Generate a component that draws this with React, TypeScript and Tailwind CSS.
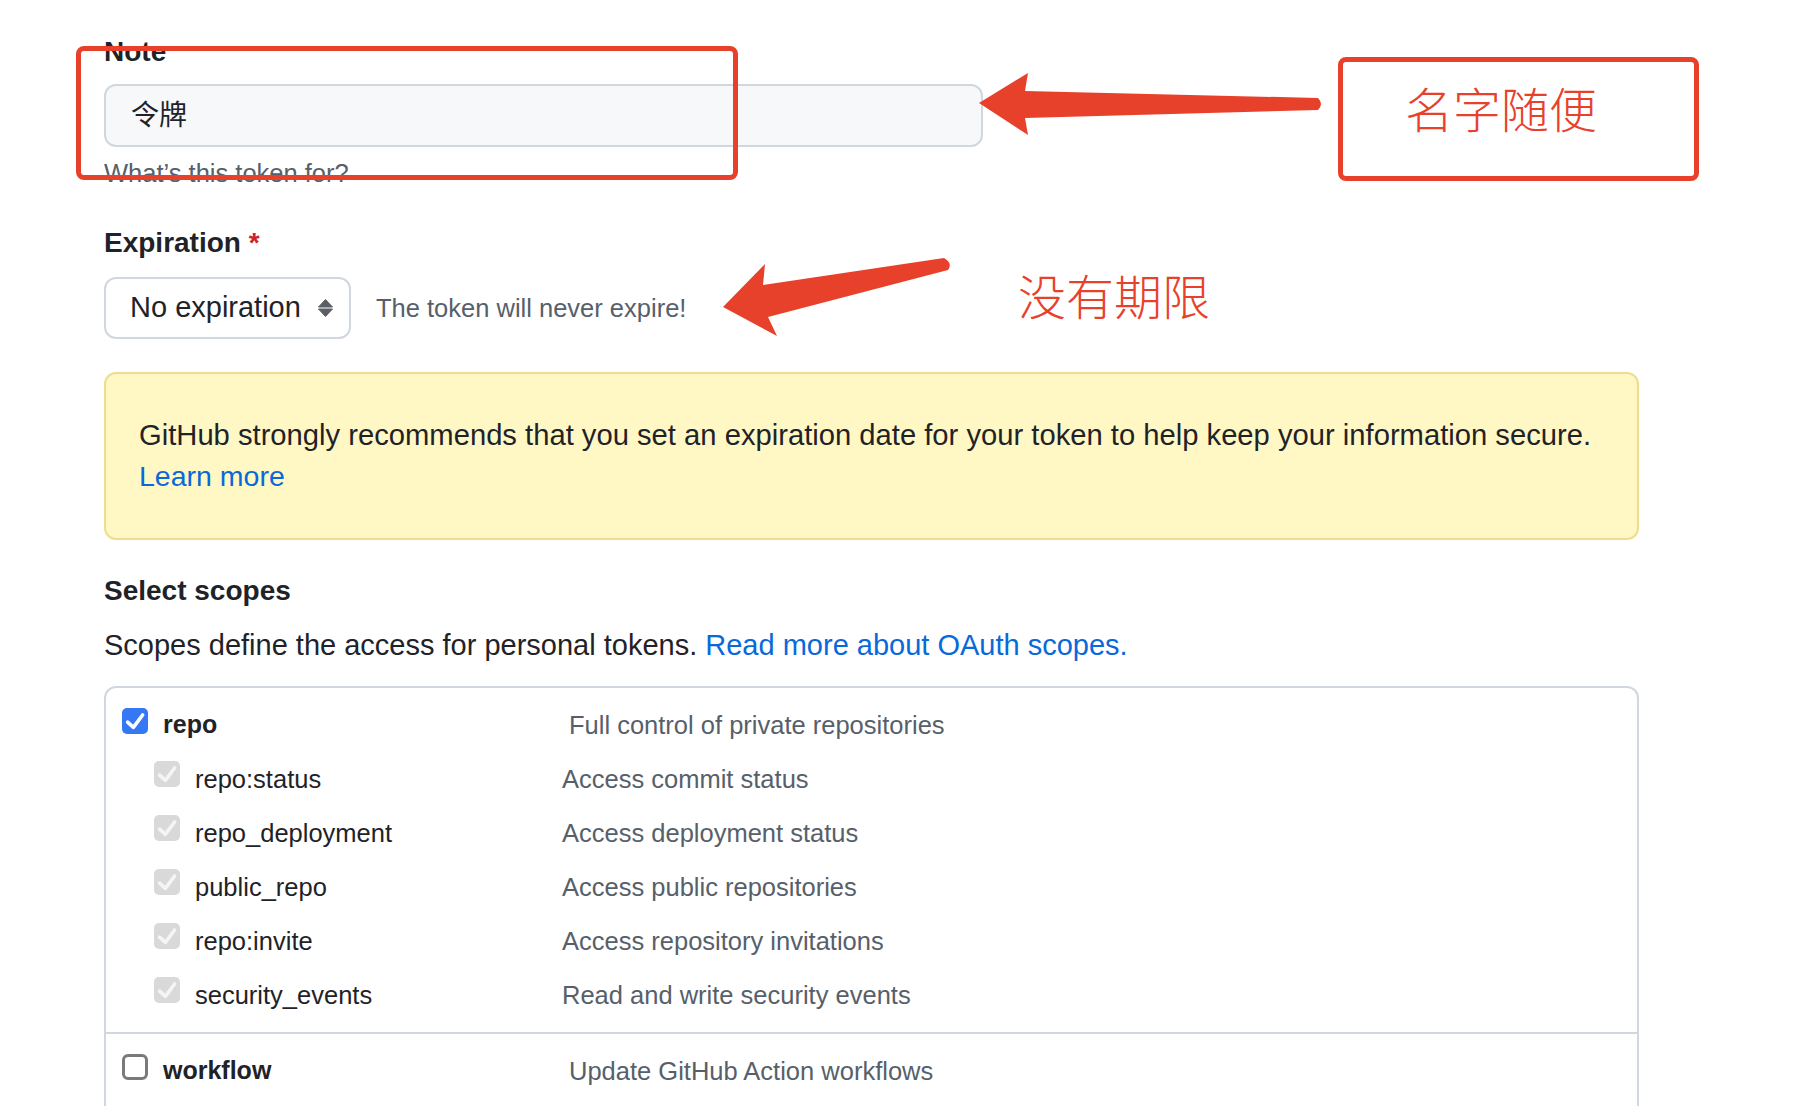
import React from 'react';

const FONT = '"Liberation Sans", "Noto Sans CJK SC", Arial, sans-serif';

const Check: React.FC<{ color: string }> = ({ color }) => (
  <svg viewBox="0 0 26 26" className="w-[26px] h-[26px]">
    <path d="M5.6 14.2 L11.4 19.4 L20.6 7" fill="none" stroke={color} strokeWidth="3.6" strokeLinecap="round" strokeLinejoin="round" />
  </svg>
);

const Box: React.FC<{ kind: 'on' | 'disabled' | 'off' }> = ({ kind }) => {
  if (kind === 'on') {
    return (
      <span className="w-[26px] h-[26px] mb-[8px] rounded-[5px] bg-[#3478f6] flex items-center justify-center shrink-0">
        <Check color="#ffffff" />
      </span>
    );
  }
  if (kind === 'disabled') {
    return (
      <span className="w-[26px] h-[26px] mb-[10px] rounded-[5px] bg-[#d9d9d9] flex items-center justify-center shrink-0">
        <Check color="#f5f5f5" />
      </span>
    );
  }
  return <span className="w-[26px] h-[26px] mb-[8px] rounded-[6px] border-[3px] border-[#7a7a7a] bg-white shrink-0" />;
};

const subScopes = [
  { name: 'repo:status', desc: 'Access commit status' },
  { name: 'repo_deployment', desc: 'Access deployment status' },
  { name: 'public_repo', desc: 'Access public repositories' },
  { name: 'repo:invite', desc: 'Access repository invitations' },
  { name: 'security_events', desc: 'Read and write security events' },
];

const App: React.FC = () => {
  return (
    <div className="relative w-[1812px] h-[1106px] overflow-hidden bg-white text-[#1f2328]" style={{ fontFamily: FONT }}>
      <div className="pl-[104px] pt-[34px] w-[1639px]">
        {/* Note */}
        <div className="text-[28px] leading-[36px] font-bold">Note</div>
        <div className="mt-[14px] w-[879px] h-[63px] rounded-[12px] border-2 border-[#d0d7de] bg-[#f6f8fa] flex items-center pl-[25px] text-[28px]">
          令牌
        </div>
        <div className="mt-[10px] text-[25.5px] leading-[32px] text-[#57606a]">What’s this token for?</div>

        {/* Expiration */}
        <div className="mt-[36px] text-[28px] leading-[36px] font-bold">
          Expiration <span className="text-[#cf222e]">*</span>
        </div>
        <div className="mt-[16px] flex items-center">
          <div className="w-[247px] h-[62px] rounded-[12px] border-2 border-[#d0d7de] bg-white flex items-center pl-[24px] pr-[16px] justify-between">
            <span className="text-[29px]">No expiration</span>
            <svg viewBox="0 0 15 18" className="w-[15px] h-[18px]">
              <path d="M7.5 0.5 L14.5 8 L0.5 8 Z" fill="#5a5f66" strokeLinejoin="round" stroke="#5a5f66" strokeWidth="1" />
              <path d="M0.5 10 L14.5 10 L7.5 17.5 Z" fill="#5a5f66" strokeLinejoin="round" stroke="#5a5f66" strokeWidth="1" />
            </svg>
          </div>
          <span className="ml-[25px] text-[25.5px] text-[#57606a]">The token will never expire!</span>
        </div>

        {/* Warning banner */}
        <div className="mt-[33px] w-[1535px] rounded-[12px] border-2 border-[#eedc8f] bg-[#fff8c5] pl-[33px] pt-[41px] pb-[41px] text-[28.5px] leading-[41px]">
          <div className="text-[29.2px]">GitHub strongly recommends that you set an expiration date for your token to help keep your information secure.</div>
          <div className="text-[#0969da]">Learn more</div>
        </div>

        {/* Scopes */}
        <div className="mt-[33px] text-[28px] leading-[36px] font-bold">Select scopes</div>
        <div className="mt-[18px] text-[29px] leading-[36px]">
          Scopes define the access for personal tokens. <span className="text-[#0969da]">Read more about OAuth scopes.</span>
        </div>

        <div className="mt-[23px] w-[1535px] h-[500px] rounded-t-[12px] border-2 border-[#d0d7de] border-b-0">
          <div className="pt-[10px] pb-[10px]">
            <div className="h-[54px] flex items-center pl-[16px]">
              <Box kind="on" />
              <span className="ml-[15px] w-[406px] text-[25px] font-bold">repo</span>
              <span className="text-[25.5px] text-[#57606a]">Full control of private repositories</span>
            </div>
            {subScopes.map((s) => (
              <div key={s.name} className="h-[54px] flex items-center pl-[48px]">
                <Box kind="disabled" />
                <span className="ml-[15px] w-[367px] text-[25.5px]">{s.name}</span>
                <span className="text-[25.5px] text-[#57606a]">{s.desc}</span>
              </div>
            ))}
          </div>
          <div className="border-t-2 border-[#d0d7de] pt-[10px]">
            <div className="h-[54px] flex items-center pl-[16px]">
              <Box kind="off" />
              <span className="ml-[15px] w-[406px] text-[25px] font-bold">workflow</span>
              <span className="text-[25.5px] text-[#57606a]">Update GitHub Action workflows</span>
            </div>
          </div>
        </div>
      </div>

      {/* annotations */}
      <div className="absolute left-[76px] top-[46px] w-[662px] h-[134px] rounded-[8px] border-[5px] border-[#e8412b]" />
      <div className="absolute left-[1338px] top-[57px] w-[361px] h-[124px] rounded-[8px] border-[5px] border-[#e8412b] pl-[62px] pt-[13px] text-[48px] leading-[64px] font-light text-[#e8412b]" style={{ fontFamily: '"Noto Sans CJK SC", sans-serif' }}>
        名字随便
      </div>
      <div className="absolute left-[1018px] top-[262px] text-[48px] leading-[64px] font-light text-[#e8412b]" style={{ fontFamily: '"Noto Sans CJK SC", sans-serif' }}>
        没有期限
      </div>
      <svg className="absolute left-0 top-0 pointer-events-none" width="1812" height="1106" viewBox="0 0 1812 1106">
        <path
          d="M979 103 L1028 73 L1025 91 L1318 98 Q1324 104 1318 110 L1025 118 L1028 135 Z"
          fill="#e8412b"
        />
        <path
          d="M723 307 L765 264 L763 285 L944 258 Q953 263 948 270 L768 317 L777 336 Z"
          fill="#e8412b"
        />
      </svg>
    </div>
  );
};

export default App;
